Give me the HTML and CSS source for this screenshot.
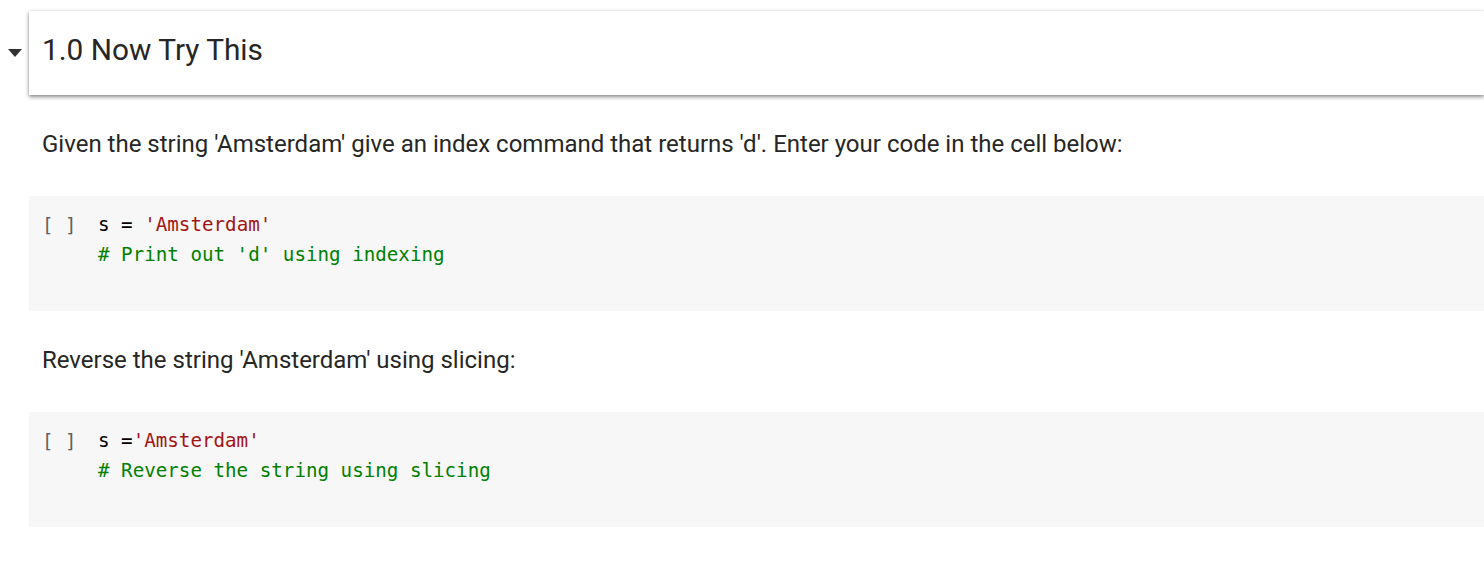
FILE: index.html
```html
<!DOCTYPE html>
<html>
<head>
<meta charset="utf-8">
<link rel="stylesheet" href="styles.css">
</head>
<body>
<div class="notebook">
  <div class="section-row">
    <div class="toggle"><svg width="14" height="8" viewBox="0 0 14 8"><path d="M0 0 L14 0 L7 8 Z" fill="#333"/></svg></div>
    <div class="header-card"><h1 class="title">1.0 Now Try This</h1></div>
  </div>
  <div class="text-cell"><p>Given the string 'Amsterdam' give an index command that returns 'd'. Enter your code in the cell below:</p></div>
  <div class="code-cell">
    <div class="prompt">[ ]</div>
    <pre class="code">s = <span class="str">'Amsterdam'</span>
<span class="cmt"># Print out 'd' using indexing</span></pre>
  </div>
  <div class="text-cell"><p>Reverse the string 'Amsterdam' using slicing:</p></div>
  <div class="code-cell">
    <div class="prompt">[ ]</div>
    <pre class="code">s =<span class="str">'Amsterdam'</span>
<span class="cmt"># Reverse the string using slicing</span></pre>
  </div>
</div>
</body>
</html>
```
FILE: styles.css
```css
html, body {
  margin: 0;
  padding: 0;
  background: #ffffff;
  overflow: hidden;
}
.notebook {
  display: flex;
  flex-direction: column;
  padding-top: 11px;
}
.section-row {
  display: flex;
  align-items: center;
}
.toggle {
  width: 29px;
  display: flex;
  justify-content: center;
  box-sizing: border-box;
}
.toggle svg { display: block; margin-left: 1px; margin-top: -1px; }
.header-card {
  flex: 1;
  height: 84px;
  background: #fff;
  box-shadow: 0 2px 4px rgba(0,0,0,0.45), 0 0 3px rgba(0,0,0,0.08);
  display: flex;
  align-items: center;
  padding-left: 13px;
}
.title {
  margin: 0;
  margin-top: -8px;
  font-family: Roboto, "Noto Sans", sans-serif;
  font-weight: 400;
  font-size: 29.8px;
  color: #262626;
}
.text-cell {
  margin-left: 29px;
  height: 101px;
  display: flex;
  align-items: center;
  padding-left: 13px;
}
.text-cell p {
  margin: 0;
  margin-top: -3px;
  font-family: Roboto, "Noto Sans", sans-serif;
  font-size: 24px;
  color: #262626;
}
.code-cell {
  margin-left: 29px;
  height: 115px;
  background: #f7f7f7;
  display: flex;
  padding: 14px 0 0 13px;
  box-sizing: border-box;
}
.prompt {
  width: 56px;
  font-family: "DejaVu Sans Mono", monospace;
  font-size: 19px;
  line-height: 30px;
  color: #616161;
}
.code {
  margin: 0;
  font-family: "DejaVu Sans Mono", monospace;
  font-size: 19.2px;
  line-height: 30px;
  color: #000;
}
.str { color: #a31515; }
.cmt { color: #008000; }
```
